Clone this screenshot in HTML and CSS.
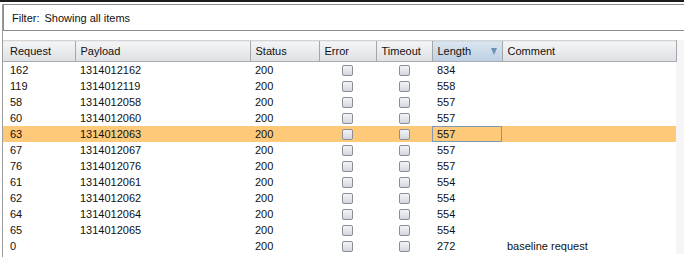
FILE: index.html
```html
<!DOCTYPE html>
<html lang="en">
<head>
  <meta charset="UTF-8">
  <title>Intruder results</title>
  <link rel="stylesheet" href="styles.css">
</head>
<body>

<div class="panel">
  <div class="filter">
    <span class="filter-label">Filter:</span>
    <span>Showing all items</span>
  </div>

  <div class="results">
    <table class="grid">
      <colgroup>
        <col class="c-req">
        <col class="c-payload">
        <col class="c-status">
        <col class="c-error">
        <col class="c-timeout">
        <col class="c-length">
        <col class="c-comment">
      </colgroup>
      <thead>
        <tr>
          <th class="first">Request</th>
          <th>Payload</th>
          <th>Status</th>
          <th>Error</th>
          <th>Timeout</th>
          <th class="sorted"><span class="th-inner">Length <span class="arrow"></span></span></th>
          <th>Comment</th>
        </tr>
      </thead>
      <tbody id="rows"></tbody>
    </table>
  </div>
</div>

<script>
  const results = [
    ["162", "1314012162", "200", "834", ""],
    ["119", "1314012119", "200", "558", ""],
    ["58", "1314012058", "200", "557", ""],
    ["60", "1314012060", "200", "557", ""],
    ["63", "1314012063", "200", "557", ""],
    ["67", "1314012067", "200", "557", ""],
    ["76", "1314012076", "200", "557", ""],
    ["61", "1314012061", "200", "554", ""],
    ["62", "1314012062", "200", "554", ""],
    ["64", "1314012064", "200", "554", ""],
    ["65", "1314012065", "200", "554", ""],
    ["0", "", "200", "272", "baseline request"]
  ];

  const selected = 4;
  const tbody = document.getElementById("rows");

  results.forEach((r, i) => {
    const tr = document.createElement("tr");
    if (i === selected) tr.className = "selected";
    tr.innerHTML =
      `<td class="first">${r[0]}</td>` +
      `<td>${r[1]}</td>` +
      `<td>${r[2]}</td>` +
      `<td class="check"><span class="box"></span></td>` +
      `<td class="check"><span class="box"></span></td>` +
      `<td class="${i === selected ? "focus" : ""}">${r[3]}</td>` +
      `<td>${r[4]}</td>`;
    tbody.appendChild(tr);
  });
</script>

</body>
</html>
```

FILE: styles.css
```css
body {
  margin: 0;
  background: #fff;
  font-family: "Liberation Sans", Arial, sans-serif;
  font-size: 11px;
  color: #111;
  border-top: 2px solid #1e1e1e;
  height: 255px;
  overflow: hidden;
}

.panel {
  margin-left: 2px;
  border-left: 1px solid #9c9c9c;
  height: 100%;
}

.filter {
  margin-top: 2px;
  height: 25px;
  border: 1px solid #8c8c8c;
  border-right: none;
  display: flex;
  align-items: center;
  padding-left: 8px;
  background: #fff;
}

.filter-label {
  margin-right: 5px;
}

.results {
  margin-top: 9px;
  width: 673px;
  box-shadow: 8px 0 0 #f5f5f5;
}

.grid {
  border-collapse: collapse;
  table-layout: fixed;
  width: 673px;
}

.c-req { width: 72px; }
.c-payload { width: 175px; }
.c-status { width: 69px; }
.c-error { width: 57px; }
.c-timeout { width: 56px; }
.c-length { width: 70px; }
.c-comment { width: 174px; }

.grid th {
  height: 20px;
  padding: 0 5px;
  text-align: left;
  font-weight: normal;
  white-space: nowrap;
  background: linear-gradient(#f4f5f7, #dde0e4);
  border-top: 1px solid #d4d4d4;
  border-bottom: 1px solid #a9adb2;
  border-left: 1px solid #a3a7ac;
}

.grid th:last-child {
  border-right: 1px solid #a3a7ac;
}

.grid th.first {
  border-left: none;
  padding-left: 7px;
}

.grid th.sorted {
  background: linear-gradient(#dce6f0, #bccfe3);
}

.th-inner {
  display: flex;
  align-items: center;
  justify-content: space-between;
}

.arrow {
  width: 0;
  height: 0;
  border-left: 3px solid transparent;
  border-right: 3px solid transparent;
  border-top: 7px solid #6d8fb3;
}

.grid td {
  height: 16px;
  padding: 0 5px;
  white-space: nowrap;
  overflow: hidden;
}

.grid td.first {
  padding-left: 7px;
}

.grid td.check {
  text-align: center;
  padding: 0;
  line-height: 0;
}

.box {
  display: inline-block;
  width: 9px;
  height: 9px;
  border: 1px solid #8b9096;
  border-radius: 2px;
  background: linear-gradient(#f3f4f6, #d3d7dc);
}

.grid tr.selected td {
  background: #ffc97a;
}

.grid td.focus {
  box-shadow: inset 0 0 0 1px #8097b0;
}
```
